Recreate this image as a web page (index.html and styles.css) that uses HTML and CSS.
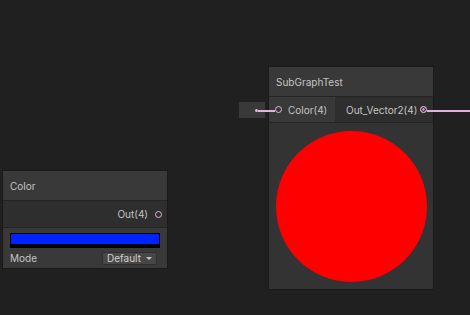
FILE: index.html
```html
<!DOCTYPE html>
<html lang="en">
<head>
  <meta charset="UTF-8">
  <title>Shader Graph</title>
  <link rel="stylesheet" href="styles.css">
</head>
<body>
  <div class="graph">
    <div class="node node-color">
      <div class="title">Color</div>
      <div class="out-row">
        <span>Out(4)</span>
        <span class="port"></span>
      </div>
      <div class="body">
        <div class="swatch"></div>
        <div class="field">
          <span>Mode</span>
          <span class="dropdown">Default <span class="arrow"></span></span>
        </div>
      </div>
    </div>

    <div class="inline-input">
      <span class="dot"></span>
    </div>

    <div class="node node-sub">
      <div class="title">SubGraphTest</div>
      <div class="ports">
        <div class="inputs">
          <span class="port"></span>
          <span>Color(4)</span>
        </div>
        <div class="outputs">
          <span>Out_Vector2(4)</span>
          <span class="port filled"></span>
        </div>
      </div>
      <div class="preview">
        <div class="ball"></div>
      </div>
    </div>

    <svg class="wires" width="470" height="315">
      <line x1="258" y1="111" x2="275" y2="111" stroke="#e2b3dd" stroke-width="2"/>
      <line x1="427" y1="111" x2="470" y2="111" stroke="#e2b3dd" stroke-width="2"/>
    </svg>
  </div>
</body>
</html>
```

FILE: styles.css
```css
body {
  margin: 0;
  background: #202020;
  font-family: Inter, "Noto Sans", sans-serif;
  font-size: 10px;
  color: #c4c4c4;
}
.graph {
  position: relative;
  width: 470px;
  height: 315px;
  overflow: hidden;
}
.wires {
  position: absolute;
  left: 0;
  top: 0;
  pointer-events: none;
}
.node {
  position: absolute;
  width: 164px;
  background: #2e2e2e;
  box-shadow: 0 0 0 1px #1a1a1a;
  display: flex;
  flex-direction: column;
}
.node-color {
  left: 3px;
  top: 171px;
}
.node-sub {
  left: 269px;
  top: 67px;
}
.title {
  height: 30px;
  background: #393939;
  display: flex;
  align-items: center;
  padding-left: 7px;
  border-bottom: 1px solid #242424;
  box-sizing: border-box;
}
.out-row {
  height: 27px;
  background: #2e2e2e;
  display: flex;
  justify-content: flex-end;
  align-items: center;
  gap: 7px;
  padding-right: 5px;
  border-bottom: 1px solid #242424;
  box-sizing: border-box;
}
.port {
  width: 5px;
  height: 5px;
  border-radius: 50%;
  border: 1.5px solid #e2b3dd;
  box-sizing: content-box;
}
.port.filled {
  background: #e2b3dd;
  box-shadow: inset 0 0 0 1.3px #2e2e2e;
}
.body {
  height: 40px;
  background: #393939;
  padding: 5px 7px 0 7px;
  box-sizing: border-box;
}
.swatch {
  height: 15px;
  background: #0022ff;
  border: 1px solid #000;
  border-bottom-width: 4px;
  box-sizing: border-box;
}
.field {
  display: flex;
  justify-content: space-between;
  align-items: center;
  margin-top: 3px;
  height: 14px;
}
.dropdown {
  width: 55px;
  height: 13px;
  background: #474747;
  border: 1px solid #303030;
  border-radius: 2px;
  display: flex;
  align-items: center;
  justify-content: space-between;
  padding: 0 4px;
  box-sizing: border-box;
  color: #d0d0d0;
  margin-right: 3px;
}
.arrow {
  width: 0;
  height: 0;
  border-left: 3px solid transparent;
  border-right: 3px solid transparent;
  border-top: 3px solid #c4c4c4;
}
.inline-input {
  position: absolute;
  left: 239px;
  top: 102px;
  width: 26px;
  height: 16px;
  background: #393939;
  display: flex;
  align-items: center;
  justify-content: flex-end;
  padding-right: 7px;
  box-sizing: border-box;
}
.dot {
  width: 3px;
  height: 3px;
  border-radius: 50%;
  background: #e2b3dd;
}
.ports {
  height: 26px;
  display: flex;
  border-bottom: 1px solid #242424;
  box-sizing: border-box;
}
.inputs {
  width: 66px;
  background: #393939;
  display: flex;
  align-items: center;
  gap: 6px;
  padding-left: 6px;
  box-sizing: border-box;
}
.outputs {
  flex: 1;
  background: #2e2e2e;
  display: flex;
  align-items: center;
  justify-content: space-between;
  padding: 0 6px 0 11px;
}
.preview {
  height: 166px;
  background: #333333;
  display: flex;
  justify-content: center;
  align-items: center;
}
.ball {
  width: 151px;
  height: 151px;
  border-radius: 50%;
  background: #ff0000;
  margin-left: 1px;
}
```
